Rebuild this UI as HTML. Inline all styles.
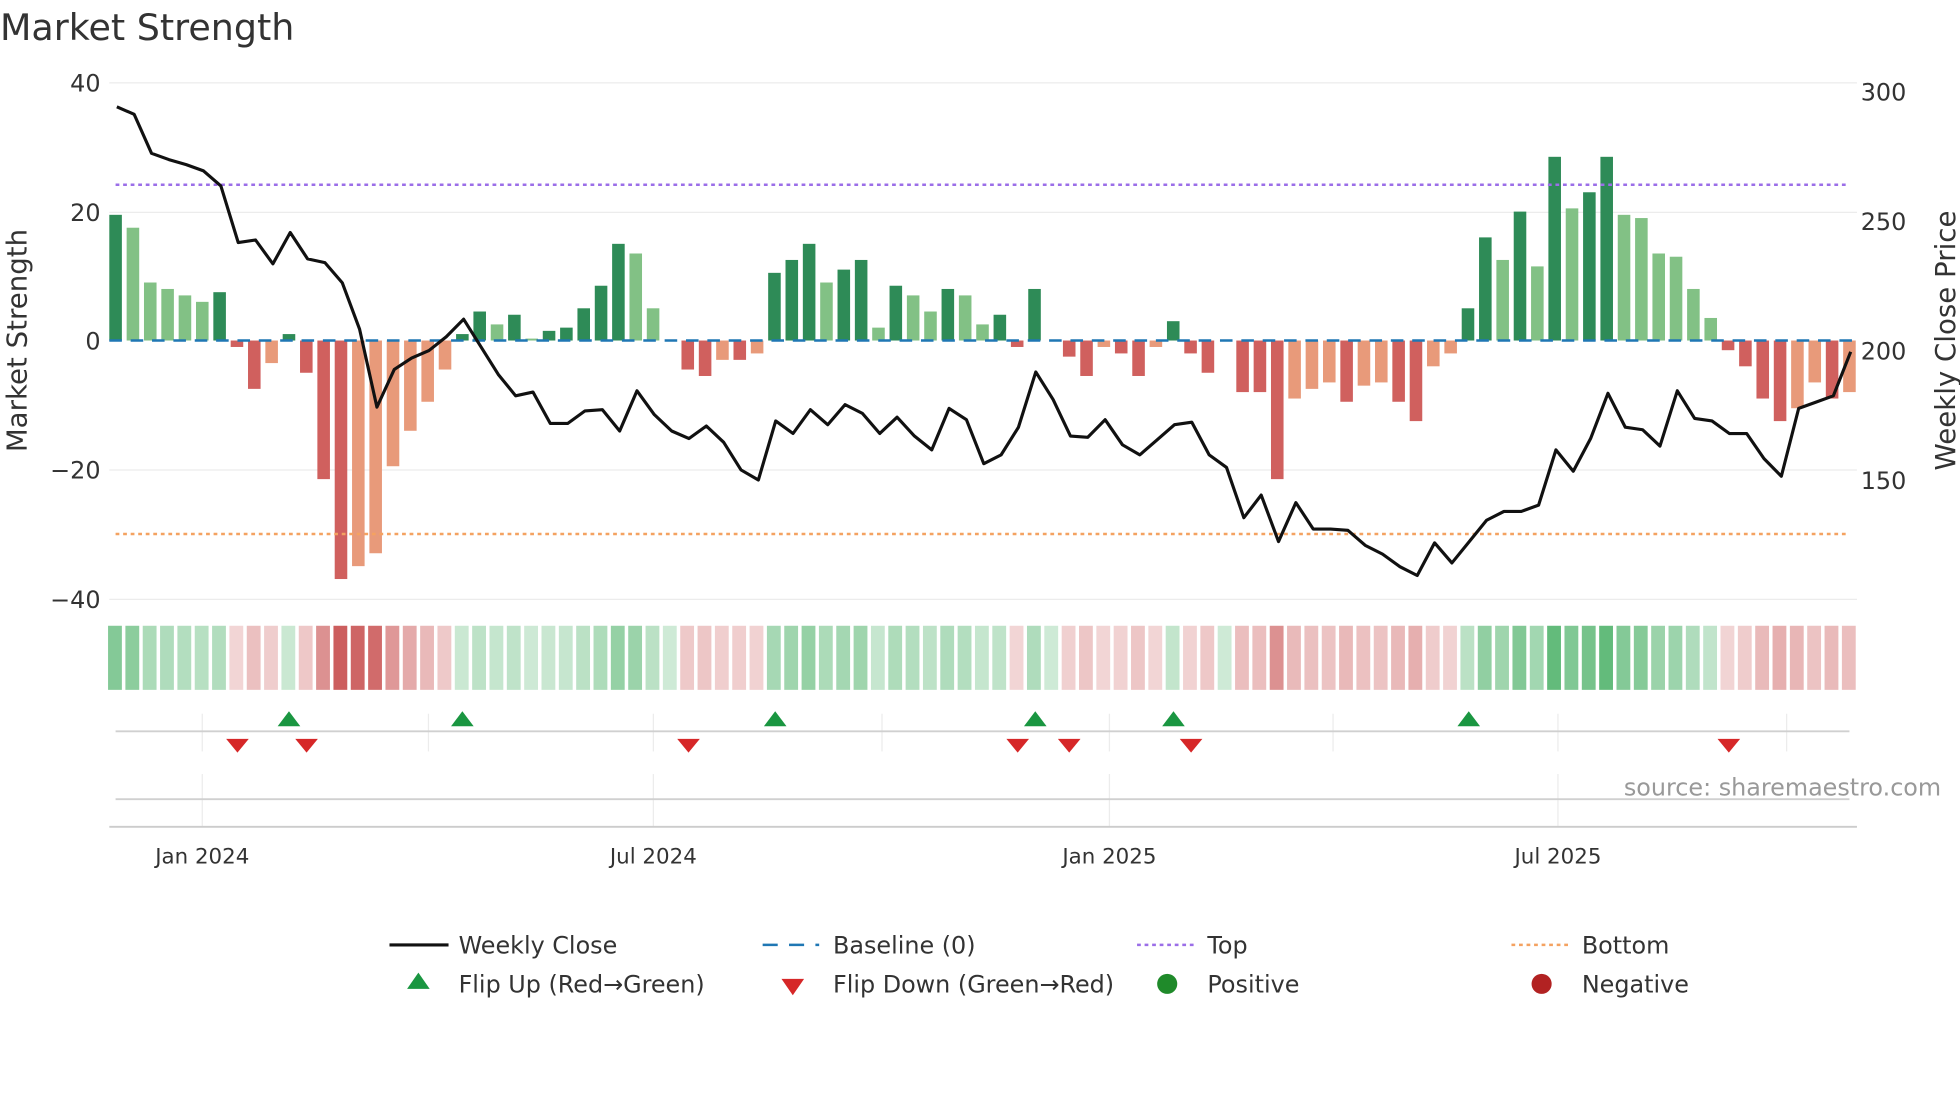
<!DOCTYPE html>
<html><head><meta charset="utf-8"><style>
html,body{margin:0;padding:0;background:#fff;width:1960px;height:1102px;overflow:hidden}
svg{display:block;font-family:"DejaVu Sans","Liberation Sans",sans-serif}
</style></head><body>
<svg id="s" width="1960" height="1102" viewBox="0 0 1560 877" preserveAspectRatio="none" xmlns="http://www.w3.org/2000/svg">
<text x="0" y="32" font-size="29" fill="#333">Market Strength</text>
<g stroke="#ececec" stroke-width="1">
<line x1="87" x2="1478" y1="66" y2="66"/><line x1="87" x2="1478" y1="169" y2="169"/>
<line x1="87" x2="1478" y1="374" y2="374"/><line x1="87" x2="1478" y1="477" y2="477"/>
<line x1="161" x2="161" y1="568" y2="598"/><line x1="341" x2="341" y1="568" y2="598"/>
<line x1="520" x2="520" y1="568" y2="598"/><line x1="702" x2="702" y1="568" y2="598"/>
<line x1="883" x2="883" y1="568" y2="598"/><line x1="1061" x2="1061" y1="568" y2="598"/>
<line x1="1240" x2="1240" y1="568" y2="598"/><line x1="1422" x2="1422" y1="568" y2="598"/>
<line x1="161" x2="161" y1="616" y2="658"/><line x1="520" x2="520" y1="616" y2="658"/>
<line x1="883" x2="883" y1="616" y2="658"/><line x1="1240" x2="1240" y1="616" y2="658"/>
</g>
<g font-size="19" fill="#333" text-anchor="end">
<text x="80" y="73">40</text><text x="80" y="176">20</text><text x="80" y="278">0</text>
<text x="80" y="381">−20</text><text x="80" y="484">−40</text></g>
<g font-size="19" fill="#333">
<text x="1481" y="80">300</text><text x="1481" y="183">250</text><text x="1481" y="286">200</text><text x="1481" y="389">150</text></g>
<text transform="translate(21,271) rotate(-90)" font-size="22" fill="#333" text-anchor="middle">Market Strength</text>
<text transform="translate(1556,271) rotate(-90)" font-size="22" fill="#333" text-anchor="middle">Weekly Close Price</text>
<g id="bars"></g>
<line x1="87" x2="1478" y1="271" y2="271" stroke="#1f77b4" stroke-width="2" stroke-dasharray="10,7"/>
<line x1="92" x2="1472" y1="147" y2="147" stroke="#9b6ee8" stroke-width="2" stroke-dasharray="3,3"/>
<line x1="92" x2="1472" y1="425" y2="425" stroke="#f4a261" stroke-width="2" stroke-dasharray="3,3"/>
<polyline id="price" fill="none" stroke="#111" stroke-width="2.5" stroke-linejoin="round"/>
<g id="heat"></g>
<line x1="92" x2="1472" y1="582" y2="582" stroke="#d0d0d0" stroke-width="1.5"/>
<line x1="92" x2="1472" y1="636" y2="636" stroke="#d0d0d0" stroke-width="1.5"/>
<line x1="87" x2="1478" y1="658" y2="658" stroke="#ccc" stroke-width="1.5"/>
<g id="tri"></g>
<text x="1545" y="633" font-size="19" fill="#999" text-anchor="end">source: sharemaestro.com</text>
<g font-size="17" fill="#333" text-anchor="middle">
<text x="161" y="687">Jan 2024</text><text x="520" y="687">Jul 2024</text>
<text x="883" y="687">Jan 2025</text><text x="1240" y="687">Jul 2025</text></g>
<g font-size="19" fill="#333">
<line x1="310" x2="357" y1="752" y2="752" stroke="#111" stroke-width="2.5"/><text x="365" y="759">Weekly Close</text>
<line x1="607" x2="652" y1="752" y2="752" stroke="#1f77b4" stroke-width="2" stroke-dasharray="12,9"/><text x="663" y="759">Baseline (0)</text>
<line x1="905" x2="950" y1="752" y2="752" stroke="#9b6ee8" stroke-width="2" stroke-dasharray="3,3"/><text x="961" y="759">Top</text>
<line x1="1203" x2="1248" y1="752" y2="752" stroke="#f4a261" stroke-width="2" stroke-dasharray="3,3"/><text x="1259" y="759">Bottom</text>
<path d="M333,774 L342,787 L324,787Z" fill="#1a9641"/><text x="365" y="790">Flip Up (Red→Green)</text>
<path d="M622,779 L640,779 L631,792Z" fill="#d62728"/><text x="663" y="790">Flip Down (Green→Red)</text>
<circle cx="929" cy="783" r="8" fill="#1f8a2a"/><text x="961" y="790">Positive</text>
<circle cx="1227" cy="783" r="8" fill="#b22222"/><text x="1259" y="790">Negative</text>
</g>
</svg>
<script>
var V=[[19.5,'d'],[17.5,'l'],[9,'l'],[8,'l'],[7,'l'],[6,'l'],[7.5,'d'],[-1,'r'],[-7.5,'r'],[-3.5,'o'],[1,'d'],[-5,'r'],[-21.5,'r'],[-37,'r'],[-35,'o'],[-33,'o'],[-19.5,'o'],[-14,'o'],[-9.5,'o'],[-4.5,'o'],[1,'d'],[4.5,'d'],[2.5,'l'],[4,'d'],[0.3,'l'],[1.5,'d'],[2,'d'],[5,'d'],[8.5,'d'],[15,'d'],[13.5,'l'],[5,'l'],[0,'l'],[-4.5,'r'],[-5.5,'r'],[-3,'o'],[-3,'r'],[-2,'o'],[10.5,'d'],[12.5,'d'],[15,'d'],[9,'l'],[11,'d'],[12.5,'d'],[2,'l'],[8.5,'d'],[7,'l'],[4.5,'l'],[8,'d'],[7,'l'],[2.5,'l'],[4,'d'],[-1,'r'],[8,'d'],[0,'l'],[-2.5,'r'],[-5.5,'r'],[-1,'o'],[-2,'r'],[-5.5,'r'],[-1,'o'],[3,'d'],[-2,'r'],[-5,'r'],[0,'r'],[-8,'r'],[-8,'r'],[-21.5,'r'],[-9,'o'],[-7.5,'o'],[-6.5,'o'],[-9.5,'r'],[-7,'o'],[-6.5,'o'],[-9.5,'r'],[-12.5,'r'],[-4,'o'],[-2,'o'],[5,'d'],[16,'d'],[12.5,'l'],[20,'d'],[11.5,'l'],[28.5,'d'],[20.5,'l'],[23,'d'],[28.5,'d'],[19.5,'l'],[19,'l'],[13.5,'l'],[13,'l'],[8,'l'],[3.5,'l'],[-1.5,'r'],[-4,'r'],[-9,'r'],[-12.5,'r'],[-10.5,'o'],[-6.5,'o'],[-9,'r'],[-8,'o']];
var C={d:'#2e8b57',l:'#82c185',r:'#d0605e',o:'#e89a7a'};
var b='',h='',s=13.8,k=5.13;
V.forEach(function(e,i){var x=92+s*i,v=e[0],y=271-Math.max(v,0)*k,hh=Math.abs(v)*k;
b+='<rect x="'+(x-5)+'" y="'+y+'" width="10" height="'+hh+'" fill="'+C[e[1]]+'"/>';
var col;if(v>=0){var a=0.25+0.55*Math.min(v/28,1);col='rgba(60,170,90,'+a+')';}else{var a=0.22+0.7*Math.min(-v/37,1);col='rgba(200,80,80,'+a+')';}
h+='<rect x="'+(x-6)+'" y="498" width="11" height="51" fill="'+col+'"/>';});
document.getElementById('bars').innerHTML=b;document.getElementById('heat').innerHTML=h;
var P=[85,91,122,127,131,136,148,193,191,210,185,206,209,225,262,324,294,285,279,268,254,276,298,315,312,337,337,327,326,343,311,330,343,349,339,352,374,382,335,345,326,338,322,329,345,332,347,358,325,334,369,362,340,296,318,347,348,334,354,362,350,338,336,362,372,412,394,431,400,421,421,422,434,441,451,458,432,448,431,414,407,407,402,358,375,349,313,340,342,355,311,333,335,345,345,365,379,325,320,315,280];
document.getElementById('price').setAttribute('points',P.map(function(y,i){return (93+s*i).toFixed(1)+','+y}).join(' '));
var t='';[230,368,617,824,934,1169].forEach(function(x){t+='<path d="M'+x+',566 L'+(x+9)+',578 L'+(x-9)+',578Z" fill="#1a9641"/>';});
[189,244,548,810,851,948,1376].forEach(function(x){t+='<path d="M'+(x-9)+',588 L'+(x+9)+',588 L'+x+',599Z" fill="#d62728"/>';});
document.getElementById('tri').innerHTML=t;
</script>
</body></html>
